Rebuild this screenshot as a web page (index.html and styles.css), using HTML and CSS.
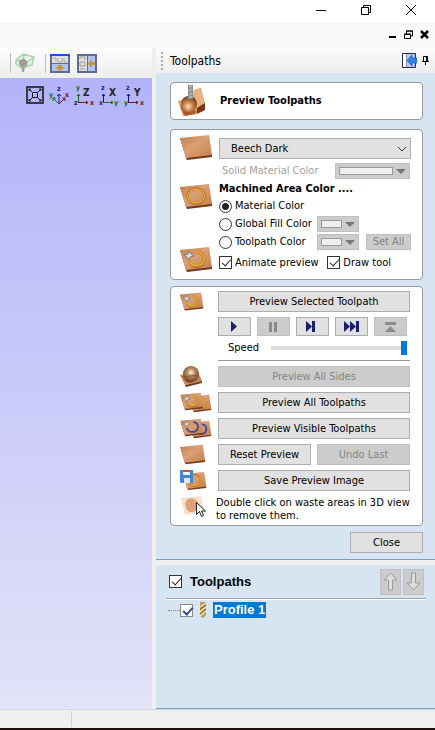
FILE: index.html
```
<!DOCTYPE html>
<html lang="en">
<head>
  <meta charset="UTF-8">
  <title>Preview Toolpaths</title>
  <link rel="stylesheet" href="styles.css">
</head>
<body>

  <!-- shared icon parts -->
  <svg class="defs" aria-hidden="true">
    <defs>
      <linearGradient id="wood" x1="0" y1="0" x2="1" y2="1">
        <stop offset="0" stop-color="#c07c4e"/>
        <stop offset="0.45" stop-color="#dba277"/>
        <stop offset="1" stop-color="#c47c4a"/>
      </linearGradient>
      <radialGradient id="ball" cx="0.5" cy="0.4" r="0.6">
        <stop offset="0" stop-color="#fff3dc"/>
        <stop offset="0.4" stop-color="#b98c64"/>
        <stop offset="1" stop-color="#6a4122"/>
      </radialGradient>
      <radialGradient id="bowl" cx="0.45" cy="0.65" r="0.6">
        <stop offset="0" stop-color="#ffdfb0"/>
        <stop offset="0.5" stop-color="#c9814d"/>
        <stop offset="1" stop-color="#7b3d1b"/>
      </radialGradient>
      <symbol id="tile" viewBox="0 0 33 27">
        <path d="M0 4 6 24 7 26 32 23 32 21Z" fill="#74391c"/>
        <path d="M0 4 29 1 32 21 6 24Z" fill="url(#wood)"/>
        <path d="M3 9 30 6M5 15 31 12M6 20 31 17" stroke="#cf9163" stroke-width="0.6"/>
      </symbol>
      <symbol id="ring" viewBox="0 0 33 27">
        <use href="#tile" width="33" height="27"/>
        <ellipse cx="16" cy="13" rx="8.500" ry="7.500" fill="none" stroke="#a3642c" stroke-width="2.500"/>
        <ellipse cx="16" cy="13" rx="8.500" ry="7" fill="none" stroke="#eda72c" stroke-width="1.500"/>
      </symbol>
      <symbol id="cut" viewBox="0 0 33 27">
        <use href="#tile" width="33" height="27"/>
        <path d="M9 15c3 8 15 7 15-2 0-4-2-6-6-7" fill="none" stroke="#a3642c" stroke-width="3"/>
        <path d="M9 15c3 7 15 6 15-2 0-4-2-6-6-7" fill="none" stroke="#eda72c" stroke-width="2"/>
        <path d="M4 9 8 8 9 5 11 8 14 10 10 11 9 14 7 11Z" fill="#d8dedb" stroke="#68706e" stroke-width="0.8"/>
      </symbol>
      <symbol id="cut-blue" viewBox="0 0 33 27">
        <use href="#tile" width="33" height="27"/>
        <path d="M9 14c2 8 15 8 16-1 0-5-3-7-7-7" fill="none" stroke="#3947a5" stroke-width="2.500"/>
        <path d="M4 8 8 7 9 4 11 7 14 9 10 10 9 13 7 10Z" fill="#d8dedb" stroke="#68706e" stroke-width="0.8"/>
      </symbol>
    </defs>
  </svg>

  <header class="titlebar">
    <button aria-label="Minimize"><svg width="12" height="12"><path d="M1 6.500h10" stroke="#000"/></svg></button>
    <button aria-label="Restore"><svg width="12" height="12" fill="none" stroke="#000"><path d="M1.500 3.500h7v7h-7zM3.500 3.500v-2h7v7h-2"/></svg></button>
    <button aria-label="Close window"><svg width="12" height="12"><path d="M1 1l10 10M11 1 1 11" stroke="#000"/></svg></button>
  </header>

  <div class="menubar">
    <button aria-label="Minimize view"><svg width="9" height="9"><path d="M1 7h7" stroke="#000" stroke-width="2"/></svg></button>
    <button aria-label="Restore view"><svg width="9" height="9" fill="none" stroke="#000"><path d="M.5 4.500h6v4h-6zM0 4h7M2.500 4V1h6v5h-2M2 1h7"/></svg></button>
    <button aria-label="Close view"><svg width="9" height="9"><path d="M1 1l7 7M8 1 1 8" stroke="#000" stroke-width="2.500"/></svg></button>
  </div>

  <main class="workspace">
    <section class="view">
      <div class="toolbar">
        <button aria-label="Material setup">
          <svg width="20" height="20"><path d="M1 7 8 1 19 4 17 12 7 15 1 11ZM1 7l11 2 7-5M12 9l-1 6M8 1l1 7" fill="#e1efe4" stroke="#a5d5ae" stroke-width="1.500"/><circle cx="8" cy="10" r="4" fill="#9c9d8c"/><path d="M6 13h4l-1 6H7z" fill="#a8a69a"/></svg>
        </button>
        <button aria-label="Split horizontally">
          <svg width="20" height="19"><path d="M1 1h18v17H1z" fill="#e3e1dc" stroke="#626a91" stroke-width="2"/><path d="M2 10h16v7H2z" fill="#b4c0f8"/><path d="M0 1h20" stroke="#2549e8" stroke-width="2"/><path d="M2 9.500h16" stroke="#626a91"/><path d="M3 4h3v4M8 4v4h4V4M14 4v4h3" fill="none" stroke="#aaa"/><path d="M8 11h4v2h3l-5 4-5-4h3z" fill="#c49b2d"/></svg>
        </button>
        <button aria-label="Split vertically">
          <svg width="20" height="19"><path d="M1 1h18v17H1z" fill="#e3e1dc" stroke="#626a91" stroke-width="2"/><path d="M11 2h7v15h-7z" fill="#b4c0f8"/><path d="M10.500 1v17" stroke="#626a91"/><path d="M3 5V3h5v3M3 8h5v4H3zM3 15h5" fill="none" stroke="#999"/><path d="M18 8h-3V5l-4 5 4 4v-3h3z" fill="#c49b2d"/></svg>
        </button>
      </div>
      <div class="canvas">
        <button aria-label="Zoom to fit"><svg width="18" height="18" fill="none" stroke="#111"><path d="M1 1h16v16H1z" stroke-width="1.500"/><path d="M6.500 6.500h5v5h-5zM3 3l3 3M15 3l-3 3M3 15l3-3M15 15l-3-3M3 5V3h2M13 3h2v2M3 13v2h2M13 15h2v-2"/></svg></button>
        <button aria-label="Isometric view"><svg width="20" height="20"><path d="M10 18V8M8 10l2-2 2 2" fill="none" stroke="#16168a"/><path d="M10 18 4 12M4 15v-3h3" fill="none" stroke="#157015"/><path d="M10 18l6-6M13 12h3v3" fill="none" stroke="#7b1515"/><text x="8" y="5" fill="#16168a">z</text><text x="0" y="11" fill="#157015">y</text><text x="16" y="11" fill="#7b1515">x</text></svg></button>
        <button aria-label="View along Z"><svg width="20" height="20"><path d="M4.500 16V8M3 10l1.500-2L6 10" fill="none" stroke="#157015"/><path d="M4 16.500h10M12 15l2 1.500-2 1.500" fill="none" stroke="#7b1515"/><text x="2" y="4" fill="#157015">y</text><text x="0" y="19" fill="#16168a">z</text><text x="16" y="19" fill="#7b1515">x</text><text class="axis" x="9" y="10">Z</text></svg></button>
        <button aria-label="View along X"><svg width="20" height="20"><path d="M4.500 16V8M3 10l1.500-2L6 10" fill="none" stroke="#16168a"/><path d="M4 16.500h10M12 15l2 1.500-2 1.500" fill="none" stroke="#157015"/><text x="2" y="4" fill="#16168a">z</text><text x="0" y="19" fill="#7b1515">x</text><text x="15" y="19" fill="#157015">y</text><text class="axis" x="10" y="10">X</text></svg></button>
        <button aria-label="View along Y"><svg width="20" height="20"><path d="M4.500 16V8M3 10l1.500-2L6 10" fill="none" stroke="#16168a"/><path d="M4 16.500h10M12 15l2 1.500-2 1.500" fill="none" stroke="#7b1515"/><text x="2" y="4" fill="#16168a">z</text><text x="0" y="19" fill="#157015">y</text><text x="16" y="19" fill="#7b1515">x</text><text class="axis" x="10" y="10">Y</text></svg></button>
      </div>
    </section>

    <aside class="sidebar">
      <div class="panel-header">
        <span class="grip"></span>
        <span class="panel-name">Toolpaths</span>
        <button aria-label="Switch layout"><svg width="15" height="15"><path d="M.5.500h13v14H.5z" fill="#fff" stroke="#252b46"/><path d="M5 1h8v13H5z" fill="#b5c8f4"/><path d="M4.500 1v13" stroke="#8b93a8"/><path d="M10 2v3h5v5h-5v3L5 7.500z" fill="#2b83e8" stroke="#2057b0" stroke-width="0.700"/></svg></button>
        <button aria-label="Pin"><svg width="7" height="9"><path d="M1.500 5V.5h4V5M0 5.500h7M3.500 6v3" fill="none" stroke="#000"/><path d="M4.500 1v4" stroke="#000"/></svg></button>
      </div>

      <div class="panel">
        <div class="card heading">
          <svg width="30" height="34" viewBox="0 0 30 34">
            <path d="M1 17 16 13 17 6 24 4 28 20 20 30 6 32Z" fill="#dc9d6c"/>
            <path d="M16 7 23 4 28 19 20 23Z" fill="#eab384"/>
            <path d="M20 24 28 19 28 26 20 30Z" fill="#7c351a"/>
            <path d="M3 22 8 32 18 30 19 27Z" fill="#a65a2d"/>
            <circle cx="12" cy="20" r="8" fill="url(#bowl)"/>
            <path d="M11 1h5v14h-5z" fill="#8b918f"/>
            <path d="M12 3l3-1M12 7l3-2M12 11l3-2M12 14l3-2" stroke="#d0d4d2"/>
          </svg>
          <h1>Preview Toolpaths</h1>
        </div>

        <div class="card options">
          <svg width="33" height="27"><use href="#tile"/></svg>
          <div class="stack">
            <div class="material">
              <select aria-label="Material"><option>Beech Dark</option></select>
              <svg width="10" height="6"><path d="M1 1l4 4 4-4" fill="none" stroke="#333"/></svg>
            </div>
            <div class="line">
              <span class="muted">Solid Material Color</span>
              <button class="swatch wide" aria-label="Solid Material Color" disabled><i></i><svg width="10" height="5"><path d="M0 0h10L5 5z" fill="#777"/></svg></button>
            </div>
          </div>

          <svg class="ring-icon" width="33" height="27"><use href="#ring"/></svg>
          <div class="stack">
            <h2>Machined Area Color ....</h2>
            <div class="line"><label><input type="radio" name="area" checked>Material Color</label></div>
            <div class="line">
              <label><input type="radio" name="area">Global Fill Color</label>
              <button class="swatch" aria-label="Global fill" disabled><i></i><svg width="10" height="5"><path d="M0 0h10L5 5z" fill="#777"/></svg></button>
            </div>
          </div>

          <svg class="cut-icon" width="33" height="27"><use href="#cut"/></svg>
          <div class="stack">
            <div class="line">
              <label><input type="radio" name="area">Toolpath Color</label>
              <button class="swatch" aria-label="Toolpath fill" disabled><i></i><svg width="10" height="5"><path d="M0 0h10L5 5z" fill="#777"/></svg></button>
              <button class="btn set-all" disabled>Set All</button>
            </div>
            <div class="line checks">
              <label><input type="checkbox" checked>Animate preview</label>
              <label><input type="checkbox" checked>Draw tool</label>
            </div>
          </div>
        </div>

        <div class="card actions">
          <svg width="24" height="21"><use href="#cut"/></svg>
          <div class="stack playback">
            <button class="btn">Preview Selected Toolpath</button>
            <div class="player">
              <button class="btn" aria-label="Play"><svg width="16" height="12"><path d="M4 0v11l6-5.500z" fill="#1c1f6b"/></svg></button>
              <button class="btn" aria-label="Pause" disabled><svg width="16" height="12"><path d="M3 1h3v10H3zM8 1h3v10H8z" fill="#8b8b8b"/></svg></button>
              <button class="btn" aria-label="Step"><svg width="16" height="12"><path d="M1 0v11l6-5.500zM7 0h3v11H7z" fill="#1c1f6b"/></svg></button>
              <button class="btn" aria-label="Skip to end"><svg width="16" height="12"><path d="M0 0v11l6-5.500zM6 0v11l6-5.500zM12 0h3v11h-3z" fill="#1c1f6b"/></svg></button>
              <button class="btn" aria-label="Reset to start" disabled><svg width="16" height="12"><path d="M2 1h11v3H2zM7.500 5 2 11h11z" fill="#8b8b8b"/></svg></button>
            </div>
            <div class="speed">
              <label for="speed">Speed</label>
              <input type="range" id="speed" min="0" max="100" value="100">
            </div>
          </div>

          <svg width="24" height="21" viewBox="0 0 24 21"><path d="M0 9 18 6 22 15 5 19Z" fill="#c98350"/><path d="M5 19 22 15 22 17 6 21Z" fill="#74391c"/><path d="M4 13q7 8 14-2z" fill="#5c2c12"/><circle cx="11" cy="8" r="8" fill="url(#ball)"/><path d="M2 11 19 9" stroke="#94582f"/></svg>
          <button class="btn" disabled>Preview All Sides</button>

          <svg width="34" height="21"><use href="#cut" x="9" y="2" width="23" height="19"/><use href="#cut" width="24" height="19"/></svg>
          <button class="btn">Preview All Toolpaths</button>

          <svg width="34" height="21"><use href="#cut-blue" x="9" y="2" width="23" height="19"/><use href="#cut-blue" width="24" height="19"/></svg>
          <button class="btn">Preview Visible Toolpaths</button>

          <svg width="26" height="21"><use href="#tile"/></svg>
          <div class="pair">
            <button class="btn">Reset Preview</button>
            <button class="btn" disabled>Undo Last</button>
          </div>

          <svg width="28" height="21"><use href="#ring" x="3" y="1" width="24" height="20"/><path d="M0 0h13v13H1l-1-1z" fill="#4485d2"/><path d="M3 0h7v5H3z" fill="#eef3fa"/><path d="M3 1h7" stroke="#d94a42" stroke-width="2"/><path d="M4 8h6v5H4z" fill="#dce7f5"/></svg>
          <button class="btn">Save Preview Image</button>

          <svg width="28" height="22"><path d="M1 2 21 0 24 16 5 19Z" fill="#f7dfcf"/><path d="M6 5c3-4 11-3 12 3s-3 8-7 8-7-6-5-11z" fill="#dca279"/><path d="M16.500 6.500v12l3-3 2 5 2-1-2-4.500h4z" fill="#fff" stroke="#222"/></svg>
          <p>Double click on waste areas in 3D view to remove them.</p>
        </div>

        <button class="btn close">Close</button>
      </div>

      <div class="tree">
        <div class="tree-header">
          <label><input type="checkbox" checked>Toolpaths</label>
          <button class="arrow" aria-label="Move up" disabled><svg width="15" height="19"><path d="M7.500 1 14 8H9.500v10h-4V8H1z" fill="#ddd" stroke="#999"/></svg></button>
          <button class="arrow" aria-label="Move down" disabled><svg width="15" height="19"><path d="M7.500 18 14 11H9.500V1h-4v10H1z" fill="#ddd" stroke="#999"/></svg></button>
        </div>
        <div class="tree-item">
          <span class="branch"></span>
          <input type="checkbox" id="profile" checked>
          <svg width="8" height="16"><path d="M1 0h6v13l-3 3-3-2z" fill="#b89c58"/><path d="M1 5 7 1M1 10l6-5M1 14l6-5" stroke="#f0e4b5" stroke-width="1.500"/><path d="M1 7 7 3M1 12l6-5" stroke="#77602c"/></svg>
          <label for="profile">Profile 1</label>
        </div>
      </div>
    </aside>
  </main>

  <footer class="statusbar"><span></span></footer>

</body>
</html>
```
FILE: styles.css
```
* {
  box-sizing: border-box;
}

body {
  margin: 0;
  min-height: 100vh;
  display: flex;
  flex-direction: column;
  font-family: "DejaVu Sans Condensed", Tahoma, sans-serif;
  font-size: 11px;
  line-height: 14px;
  color: #000;
  background: #efefef;
}

button, input, select {
  font: inherit;
  color: inherit;
  margin: 0;
}

button {
  padding: 0;
  border: none;
  background: none;
}

svg {
  display: block;
}

h1, h2, p {
  margin: 0;
  font-size: 11px;
}

.defs {
  position: absolute;
  width: 0;
  height: 0;
}

/* window bars */
.titlebar {
  display: flex;
  justify-content: flex-end;
  align-items: center;
  gap: 33px;
  height: 23px;
  padding: 0 18px 3px 0;
  background: #fff;
}

.menubar {
  display: flex;
  justify-content: flex-end;
  align-items: center;
  gap: 7px;
  height: 25px;
  padding: 0 6px 2px 0;
  background: #f9f9f9;
}

.workspace {
  flex: 1;
  display: flex;
  gap: 4px;
}

.view {
  flex: 1;
  display: flex;
  flex-direction: column;
}

.toolbar {
  display: flex;
  align-items: center;
  gap: 7px;
  height: 30px;
  padding-left: 10px;
  background: linear-gradient(#fcfcfc, #eee);
}

.toolbar button:nth-child(-n+2) {
  padding-left: 4px;
  border-left: 1px solid #bbb;
}

.toolbar button:nth-child(2) {
  margin-left: 3px;
}

.canvas {
  flex: 1;
  display: flex;
  align-items: flex-start;
  gap: 5px;
  padding: 8px 0 0 26px;
  background: linear-gradient(#b3b3fa, #e2e2f8);
}

.canvas svg {
  overflow: visible;
  font-size: 7px;
  font-weight: bold;
}

.canvas .axis {
  font-size: 10px;
  fill: #222;
}

/* side panel */
.sidebar {
  width: 279px;
  display: flex;
  flex-direction: column;
}

.panel-header {
  display: flex;
  align-items: center;
  gap: 5px;
  height: 25px;
  padding: 0 6px 0 5px;
  background: linear-gradient(#fbfbfb, #eee);
}

.grip {
  width: 2px;
  height: 18px;
  background: repeating-linear-gradient(#aaa 0 2px, transparent 2px 4px);
}

.panel-name {
  flex: 1;
  padding-left: 2px;
  font-size: 12px;
}

.panel {
  display: flex;
  flex-direction: column;
  padding: 9px 12px 6px 14px;
  background: #d7e4f1;
  border-bottom: 1px solid #7f9dbd;
}

.card {
  background: #fff;
  border: 1px solid #999;
  border-radius: 4px;
}

.heading {
  display: flex;
  align-items: center;
  gap: 13px;
  height: 38px;
  padding-left: 6px;
  margin-bottom: 9px;
}

.options, .actions {
  display: grid;
  grid-template-columns: 38px 1fr;
  align-items: start;
}

.options {
  padding: 4px 11px 5px 9px;
  margin-bottom: 6px;
}

.options .stack {
  padding-left: 1px;
}

.options .stack:nth-child(2) {
  padding-top: 4px;
}

.ring-icon {
  margin-top: 3px;
}

.cut-icon {
  margin-top: 13px;
}

.material {
  position: relative;
  margin-bottom: 3px;
}

.material select {
  display: block;
  width: 100%;
  height: 21px;
  padding: 0 11px;
  appearance: none;
  border: 1px solid #adadad;
  border-radius: 0;
  background: #e1e1e1;
}

.material svg {
  position: absolute;
  right: 4px;
  top: 8px;
}

.line {
  display: flex;
  align-items: center;
  height: 18px;
}

.line .muted {
  flex: 1;
  padding-left: 3px;
  color: #a0a0a0;
}

.line label {
  display: flex;
  align-items: center;
  gap: 3px;
  width: 98px;
  white-space: nowrap;
}

h2 {
  line-height: 17px;
}

input[type=radio], input[type=checkbox] {
  flex: none;
  width: 13px;
  height: 13px;
  appearance: none;
  border: 1px solid #333;
  background: #fff;
}

input[type=radio] {
  border-radius: 50%;
}

input[type=radio]:checked {
  background: radial-gradient(circle, #222 3px, #fff 4px);
}

input[type=checkbox]:checked::before {
  content: "";
  display: block;
  width: 4px;
  height: 8px;
  margin: 0 0 0 4px;
  border: solid #222;
  border-width: 0 1px 1px 0;
  transform: rotate(42deg);
}

.swatch {
  display: flex;
  align-items: center;
  gap: 3px;
  width: 42px;
  height: 16px;
  padding: 0 3px;
  border: 1px solid #bfbfbf;
  background: #ccc;
}

.swatch i {
  flex: 1;
  height: 8px;
  border: 1px solid #999;
  background: #efefef;
}

.wide {
  width: 75px;
  margin-right: 1px;
}

.options .checks {
  height: 23px;
  justify-content: space-between;
}

.checks label {
  width: auto;
  margin-right: 20px;
}

.checks label:first-child {
  margin-right: 0;
}

.btn {
  height: 21px;
  border: 1px solid #adadad;
  background: #e1e1e1;
}

.btn:disabled {
  color: #838383;
  border-color: #bfbfbf;
  background: #ccc;
}

.options .set-all {
  width: 45px;
  height: 16px;
  margin-left: auto;
}

.actions {
  row-gap: 5px;
  padding: 4px 12px 3px 9px;
}

.actions > .btn {
  width: 100%;
}

.playback {
  display: grid;
  border-bottom: 1px solid #999;
}

.player {
  display: grid;
  grid-template-columns: repeat(5, 33px);
  gap: 6px;
  margin-top: 5px;
}

.player .btn {
  display: grid;
  place-items: center;
  height: 19px;
}

.speed {
  display: flex;
  align-items: center;
  gap: 12px;
  height: 24px;
  padding: 0 3px 0 10px;
}

.speed input {
  flex: 1;
  min-width: 0;
  height: 14px;
  appearance: none;
  background: linear-gradient(#dcdfdf, #dcdfdf) center / 100% 4px no-repeat;
}

.speed input::-webkit-slider-thumb {
  appearance: none;
  width: 6px;
  height: 14px;
  background: #0078d7;
}

.pair {
  display: grid;
  grid-template-columns: 1fr 1fr;
  gap: 6px;
}

.actions p {
  margin: 0 -10px 0 -2px;
  line-height: 13px;
}

.close {
  align-self: flex-end;
  width: 73px;
  margin-top: 6px;
}

/* toolpath tree */
.tree {
  flex: 1;
  margin-top: 4px;
  padding: 3px 9px 0 10px;
  background: #d7e4f1;
  border-top: 1px solid #eef3f8;
  border-bottom: 1px solid #7f9dbd;
  font-family: "Liberation Sans", Arial, sans-serif;
  font-weight: bold;
  font-size: 13px;
}

.tree-header {
  display: flex;
  align-items: center;
  gap: 2px;
  height: 31px;
  padding: 0 2px 3px 3px;
  border-bottom: 1px solid #a0a0a0;
  box-shadow: 0 1px #fff;
}

.tree-header label {
  flex: 1;
  display: flex;
  align-items: center;
  gap: 8px;
}

.arrow {
  display: grid;
  place-items: center;
  width: 21px;
  height: 26px;
  border: 1px solid #bfbfbf;
  background: #ccc;
}

.tree-item {
  display: flex;
  align-items: center;
  padding: 3px 0 0 2px;
}

.branch {
  width: 12px;
  border-top: 1px dotted #888;
}

.tree-item input[type=checkbox] {
  border-color: #888;
}

.tree-item input[type=checkbox]:checked::before {
  border-color: #2b4a9b;
  border-width: 0 2px 2px 0;
}

.tree-item svg {
  margin: 0 6px;
}

.tree-item label {
  padding: 0 1px;
  line-height: 16px;
  color: #fff;
  background: #0078d7;
}

.statusbar {
  display: flex;
  height: 21px;
  padding: 1px 0;
  border-top: 1px solid #d5d5dc;
  border-bottom: 2px solid #211009;
}

.statusbar span {
  width: 72px;
  border-right: 1px solid #d0d0d0;
}
```
